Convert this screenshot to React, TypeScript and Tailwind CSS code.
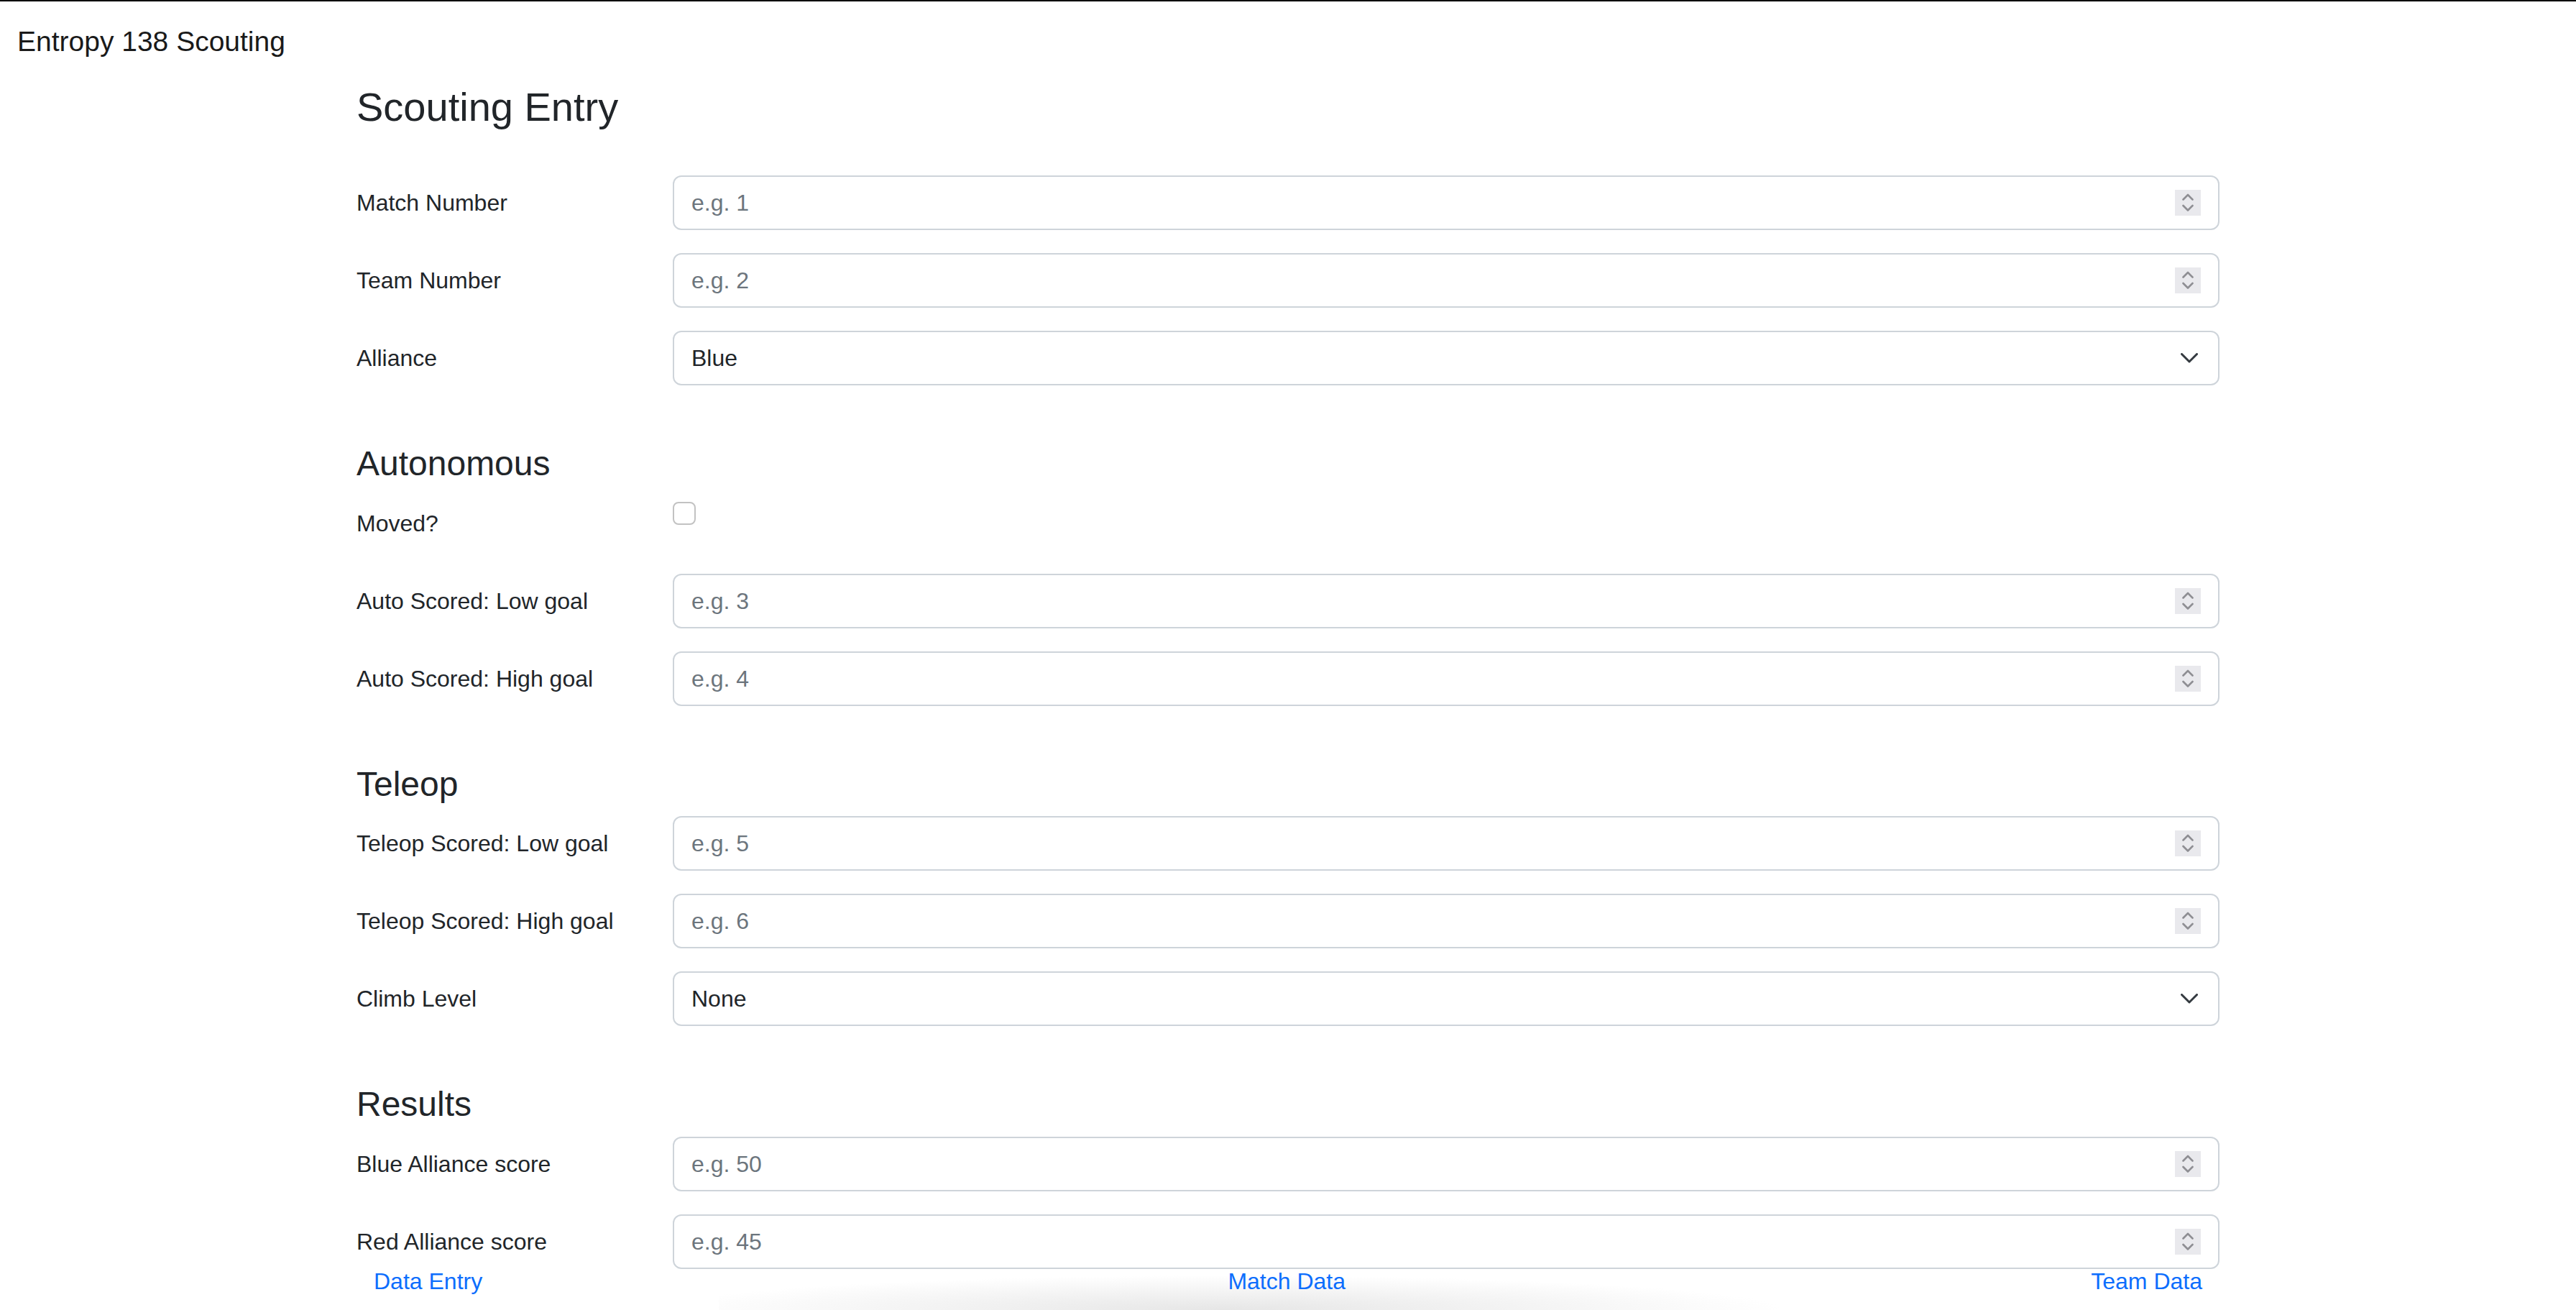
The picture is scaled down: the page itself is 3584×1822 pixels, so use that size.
import React from "react";

function Spinner() {
  return (
    <svg width="36" height="36" viewBox="0 0 36 36" className="shrink-0">
      <rect x="0" y="0" width="36" height="36" fill="#e9e9ed" />
      <polyline points="11.5,13.5 18,7 24.5,13.5" fill="none" stroke="#8e8e93" strokeWidth="2.6" strokeLinecap="round" strokeLinejoin="round" />
      <polyline points="11.5,22 18,28.5 24.5,22" fill="none" stroke="#8e8e93" strokeWidth="2.6" strokeLinecap="round" strokeLinejoin="round" />
    </svg>
  );
}

function Chevron() {
  return (
    <svg width="24" height="14" viewBox="0 0 24 14" className="shrink-0">
      <polyline points="1.5,1.5 12,12 22.5,1.5" fill="none" stroke="#343a40" strokeWidth="3" strokeLinecap="round" strokeLinejoin="round" />
    </svg>
  );
}

function NumberRow({ label, placeholder }: { label: string; placeholder: string }) {
  return (
    <div className="flex mb-[32px]">
      <div className="w-[440px] shrink-0 pt-[14px] pb-[14px] text-[32px] leading-[48px]">{label}</div>
      <div className="flex-1 h-[76px] flex items-center border-2 border-[#ced4da] rounded-[12px] bg-white pl-[24px] pr-[24px]">
        <span className="flex-1 text-[32px] leading-[48px] text-[#6c757d]">{placeholder}</span>
        <Spinner />
      </div>
    </div>
  );
}

function SelectRow({ label, value }: { label: string; value: string }) {
  return (
    <div className="flex mb-[32px]">
      <div className="w-[440px] shrink-0 pt-[14px] pb-[14px] text-[32px] leading-[48px]">{label}</div>
      <div className="flex-1 h-[76px] flex items-center border-2 border-[#ced4da] rounded-[12px] bg-white pl-[24px] pr-[28px]">
        <span className="flex-1 text-[32px] leading-[48px] text-[#212529]">{value}</span>
        <Chevron />
      </div>
    </div>
  );
}

function CheckRow({ label }: { label: string }) {
  return (
    <div className="flex mb-[32px]">
      <div className="w-[440px] shrink-0 pt-[14px] pb-[14px] text-[32px] leading-[48px]">{label}</div>
      <div className="flex-1">
        <div className="mt-[8px] w-[32px] h-[32px] rounded-[8px] border-2 border-[#c2c2c2] bg-white" />
      </div>
    </div>
  );
}

function SectionHeading({ children }: { children: React.ReactNode }) {
  return <h4 className="mt-[48px] mb-[16px] text-[48px] leading-[1.2] font-medium">{children}</h4>;
}

export default function App() {
  return (
    <div className="relative w-full h-[1822px] overflow-hidden bg-white text-[#212529] font-['Liberation_Sans',Arial,sans-serif]">
      <header className="border-t-2 border-black pl-[24px] pt-[26px]">
        <div className="text-[39px] leading-[60px] text-[#1a1a1a]">Entropy 138 Scouting</div>
      </header>

      <main className="mx-auto w-[2640px] px-[24px] pt-[27px] flex flex-col">
        <h3 className="text-[56px] leading-[1.2] font-medium mb-[62px]">Scouting Entry</h3>

        <NumberRow label="Match Number" placeholder="e.g. 1" />
        <NumberRow label="Team Number" placeholder="e.g. 2" />
        <SelectRow label="Alliance" value="Blue" />

        <SectionHeading>Autonomous</SectionHeading>
        <CheckRow label="Moved?" />
        <NumberRow label="Auto Scored: Low goal" placeholder="e.g. 3" />
        <NumberRow label="Auto Scored: High goal" placeholder="e.g. 4" />

        <SectionHeading>Teleop</SectionHeading>
        <NumberRow label="Teleop Scored: Low goal" placeholder="e.g. 5" />
        <NumberRow label="Teleop Scored: High goal" placeholder="e.g. 6" />
        <SelectRow label="Climb Level" value="None" />

        <SectionHeading>Results</SectionHeading>
        <NumberRow label="Blue Alliance score" placeholder="e.g. 50" />
        <NumberRow label="Red Alliance score" placeholder="e.g. 45" />
      </main>

      <div className="pointer-events-none absolute bottom-0 left-[1000px] w-[1560px] h-[48px] bg-[radial-gradient(ellipse_50%_100%_at_45%_100%,#e6e6e6,rgba(255,255,255,0))]" />

      <nav className="absolute bottom-0 left-0 right-0">
        <div className="mx-auto w-[2640px] px-[24px] flex justify-between">
          <a className="px-[24px] py-[16px] text-[32px] leading-[48px] text-[#0d6efd]" href="#">Data Entry</a>
          <a className="px-[24px] py-[16px] text-[32px] leading-[48px] text-[#0d6efd]" href="#">Match Data</a>
          <a className="px-[24px] py-[16px] text-[32px] leading-[48px] text-[#0d6efd]" href="#">Team Data</a>
        </div>
      </nav>
    </div>
  );
}
